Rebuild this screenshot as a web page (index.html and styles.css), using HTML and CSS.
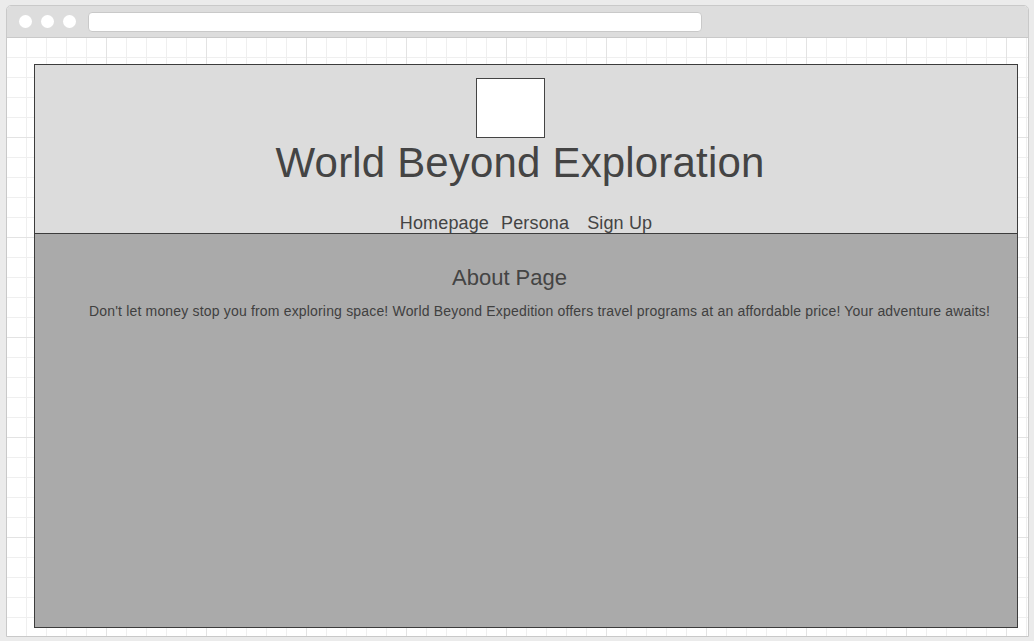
FILE: index.html
```html
<!DOCTYPE html>
<html>
<head>
<meta charset="utf-8">
<title>World Beyond Exploration</title>
<link rel="stylesheet" href="styles.css">
</head>
<body>
<div class="window">
  <div class="titlebar">
    <span class="dot"></span>
    <span class="dot"></span>
    <span class="dot"></span>
    <div class="address"></div>
  </div>
  <div class="canvas">
    <div class="page">
      <header class="site-header">
        <div class="logo-row"><div class="logo"></div></div>
        <h1 class="title">World Beyond Exploration</h1>
        <nav class="nav">
          <a class="nav-link">Homepage</a>
          <a class="nav-link">Persona</a>
          <a class="nav-link nav-link-last">Sign Up</a>
        </nav>
      </header>
      <main class="content">
        <h2 class="heading">About Page</h2>
        <p class="text">Don't let money stop you from exploring space! World Beyond Expedition offers travel programs at an affordable price! Your adventure awaits!</p>
      </main>
    </div>
  </div>
</div>
</body>
</html>
```

FILE: styles.css
```css
* { box-sizing: border-box; }

html, body {
  margin: 0;
  padding: 0;
}

body {
  background: #ebebeb;
  font-family: "Liberation Sans", Arial, sans-serif;
  color: #444;
  padding: 5px 0 0 6px;
}

.window {
  width: 1023px;
  height: 632px;
  border: 1px solid #c9c9c9;
  border-radius: 5px 5px 0 0;
  background: #fff;
  display: flex;
  flex-direction: column;
  overflow: hidden;
}

.titlebar {
  height: 32px;
  flex: none;
  background: #dddddd;
  border-bottom: 1px solid #c9c9c9;
  display: flex;
  align-items: center;
  padding-left: 12px;
  gap: 9px;
}

.dot {
  width: 13px;
  height: 13px;
  border-radius: 50%;
  background: #fff;
  flex: none;
}

.address {
  margin-left: 3px;
  width: 614px;
  height: 20px;
  background: #fff;
  border: 1px solid #c9c9c9;
  border-radius: 4px;
}

.canvas {
  flex: 1;
  padding: 26px 0 0 27px;
  background-color: #fff;
  background-image:
    linear-gradient(to right, transparent 99px, #e3e3e3 99px),
    linear-gradient(to bottom, transparent 99px, #e3e3e3 99px),
    linear-gradient(to right, transparent 19px, #efefef 19px),
    linear-gradient(to bottom, transparent 19px, #efefef 19px);
  background-size: 100px 100px, 100px 100px, 20px 20px, 20px 20px;
}

.page {
  width: 984px;
  height: 564px;
  border: 1px solid #3c3c3c;
  background: #aaaaaa;
  display: flex;
  flex-direction: column;
}

.site-header {
  background: #dcdcdc;
  border-bottom: 1px solid #3c3c3c;
  padding-top: 13px;
}

.logo-row {
  display: flex;
  justify-content: center;
  padding-right: 31px;
}

.logo {
  width: 69px;
  height: 60px;
  background: #fff;
  border: 1px solid #444;
}

.title {
  margin: 1px 0 0;
  padding-right: 12px;
  font-size: 42px;
  font-weight: normal;
  line-height: 48px;
  letter-spacing: 0.17px;
  text-align: center;
  color: #444;
}

.nav {
  margin-top: 26px;
  display: flex;
  justify-content: center;
  gap: 12px;
  font-size: 18px;
  line-height: 20px;
  letter-spacing: 0.15px;
}

.nav-link {
  color: #444;
  text-decoration: none;
}

.nav-link-last {
  margin-left: 6px;
}

.content {
  flex: 1;
  padding-top: 31px;
}

.heading {
  margin: 0;
  font-size: 22px;
  font-weight: normal;
  line-height: 25px;
  text-align: center;
  padding-right: 33px;
  color: #444;
}

.text {
  margin: 13px 0 0;
  padding-left: 54px;
  font-size: 14px;
  line-height: 16px;
  letter-spacing: 0.175px;
  color: #404040;
}
```
